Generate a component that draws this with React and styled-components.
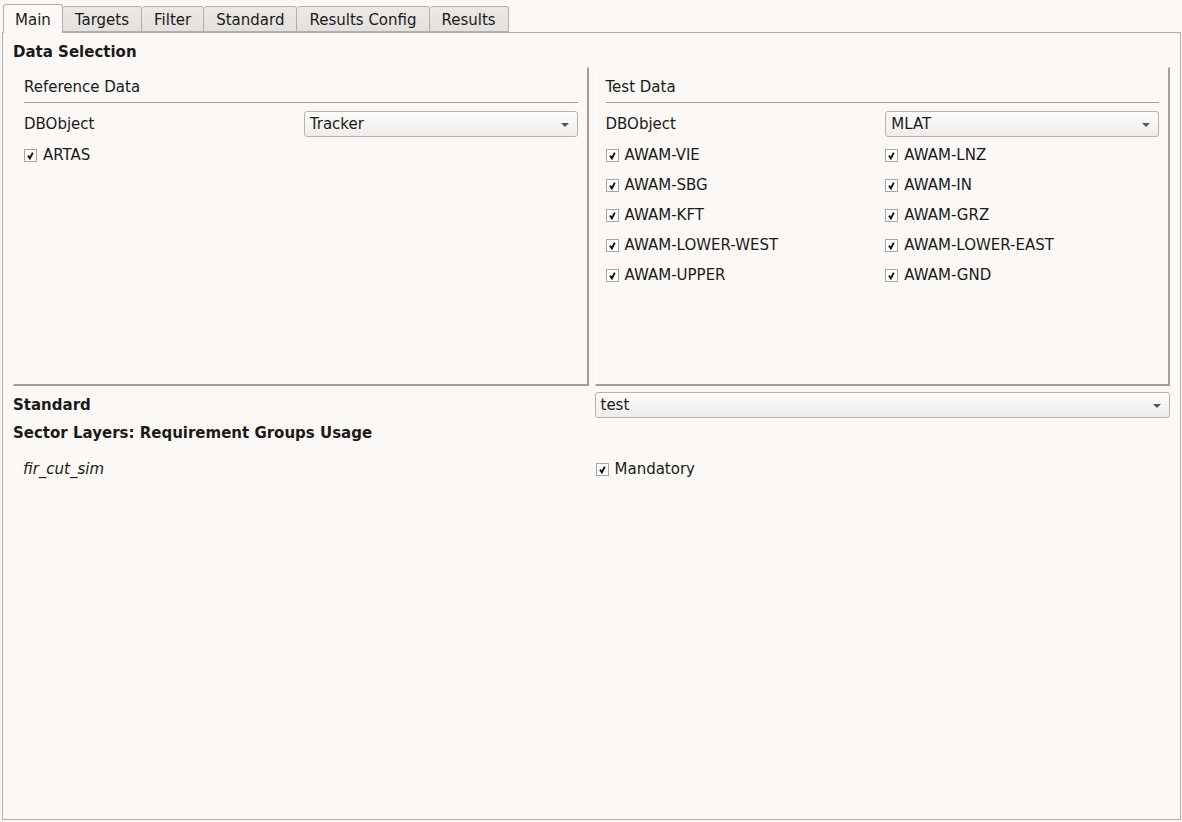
import React from 'react';
import styled, { createGlobalStyle } from 'styled-components';

const GlobalStyle = createGlobalStyle`
  html, body {
    margin: 0;
    padding: 0;
    background: #fbf8f5;
  }
  body {
    font-family: 'DejaVu Sans', 'Noto Sans', sans-serif;
    font-size: 15px;
    color: #1a1a1a;
  }
`;

const tabs = ['Main', 'Targets', 'Filter', 'Standard', 'Results Config', 'Results'];

const refSources = ['ARTAS'];
const testSources = [
  'AWAM-VIE',
  'AWAM-LNZ',
  'AWAM-SBG',
  'AWAM-IN',
  'AWAM-KFT',
  'AWAM-GRZ',
  'AWAM-LOWER-WEST',
  'AWAM-LOWER-EAST',
  'AWAM-UPPER',
  'AWAM-GND',
];

const Window = styled.div`
  width: 1182px;
  height: 822px;
  box-sizing: border-box;
  padding: 4px 1px 2px 2px;
  display: flex;
  flex-direction: column;
`;

const TabBar = styled.div`
  display: flex;
  align-items: flex-end;
  padding-left: 1px;
  height: 28px;
  position: relative;
  z-index: 1;
`;

const Tab = styled.div`
  box-sizing: border-box;
  height: ${(p) => (p.active ? '29px' : '26px')};
  padding: ${(p) => (p.active ? '1px 11px 0 11px' : '1px 12px 0 12px')};
  display: flex;
  align-items: center;
  border: 1px solid #b3afab;
  border-bottom: ${(p) => (p.active ? 'none' : '1px solid #b3afab')};
  border-left: ${(p) => (p.active ? '1px solid #b3afab' : 'none')};
  border-radius: 3px 3px 0 0;
  background: ${(p) => (p.active ? '#fbf8f5' : 'linear-gradient(#ebe8e5, #e3e0dd)')};
  margin-bottom: ${(p) => (p.active ? '-1px' : '0')};
  color: #1a1a1a;
  white-space: nowrap;
`;

const Pane = styled.div`
  flex: 1;
  border: 1px solid #b3afab;
  background: #fbf8f5;
  padding: 9px 10px 0 10px;
  display: flex;
  flex-direction: column;
`;

const SectionTitle = styled.div`
  font-weight: bold;
  height: 20px;
  line-height: 20px;
  margin-top: ${(p) => p.top || 0}px;
`;

const Columns = styled.div`
  display: grid;
  grid-template-columns: 1fr 1fr;
  column-gap: 6px;
  margin-top: ${(p) => p.top || 0}px;
  align-items: center;
`;

const Frame = styled.div`
  box-sizing: border-box;
  height: 319px;
  border-top: 1px solid #ffffff;
  border-left: 1px solid #ffffff;
  border-right: 2px solid #a19d99;
  border-bottom: 2px solid #a19d99;
  padding: 9px 9px 0 10px;
`;

const GroupTitle = styled.div`
  height: 20px;
  line-height: 20px;
  padding-bottom: 5px;
  border-bottom: 1px solid #a19d99;
`;

const FieldRow = styled.div`
  display: grid;
  grid-template-columns: 1fr 1fr;
  column-gap: 6px;
  align-items: center;
  margin-top: ${(p) => p.top || 0}px;
  height: ${(p) => p.h || 30}px;
`;

const Combo = styled.div`
  box-sizing: border-box;
  height: 26px;
  border: 1px solid #b6b2ae;
  border-radius: 3px;
  background: linear-gradient(#fdfcfb, #efedeb);
  display: flex;
  align-items: center;
  justify-content: space-between;
  padding: 0 8px 0 5px;
  color: #1a1a1a;
`;

const Arrow = styled.span`
  width: 0;
  height: 0;
  border-left: 4px solid transparent;
  border-right: 4px solid transparent;
  border-top: 4px solid #555;
  margin-top: 1px;
`;

const CheckLabel = styled.label`
  display: flex;
  align-items: center;
  gap: 6px;
  padding-left: ${(p) => p.indent || 0}px;
`;

const Box = styled.span`
  box-sizing: border-box;
  width: 13px;
  height: 13px;
  border: 1px solid #a9a5a1;
  background: #ffffff;
  display: flex;
  align-items: center;
  justify-content: center;
`;

const SourceGrid = styled.div`
  display: grid;
  grid-template-columns: 1fr 1fr;
  column-gap: 6px;
  grid-auto-rows: 30px;
  align-items: center;
  margin-top: 3px;
`;

const LayerName = styled.div`
  font-style: italic;
  padding-left: 10px;
`;

const Check = ({ label, indent }) => (
  <CheckLabel indent={indent}>
    <Box>
      <svg width="9" height="9" viewBox="0 0 9 9">
        <path d="M2 4.6 L3.9 7.4 L6.8 1.6" fill="none" stroke="#111" strokeWidth="1.9" />
      </svg>
    </Box>
    {label}
  </CheckLabel>
);

const DataGroup = ({ title, dbObject, sources }) => (
  <Frame>
    <GroupTitle>{title}</GroupTitle>
    <FieldRow top={8} h={26}>
      <span>DBObject</span>
      <Combo>
        {dbObject}
        <Arrow />
      </Combo>
    </FieldRow>
    <SourceGrid>
      {sources.map((s) => (
        <Check key={s} label={s} />
      ))}
    </SourceGrid>
  </Frame>
);

export default function App() {
  return (
    <>
      <GlobalStyle />
      <Window>
        <TabBar>
          {tabs.map((t, i) => (
            <Tab key={t} active={i === 0}>
              {t}
            </Tab>
          ))}
        </TabBar>
        <Pane>
          <SectionTitle>Data Selection</SectionTitle>
          <Columns top={5}>
            <DataGroup title="Reference Data" dbObject="Tracker" sources={refSources} />
            <DataGroup title="Test Data" dbObject="MLAT" sources={testSources} />
          </Columns>
          <Columns top={6}>
            <SectionTitle>Standard</SectionTitle>
            <Combo>
              test
              <Arrow />
            </Combo>
          </Columns>
          <SectionTitle top={5}>Sector Layers: Requirement Groups Usage</SectionTitle>
          <Columns top={17}>
            <LayerName>fir_cut_sim</LayerName>
            <Check label="Mandatory" indent={1} />
          </Columns>
        </Pane>
      </Window>
    </>
  );
}
